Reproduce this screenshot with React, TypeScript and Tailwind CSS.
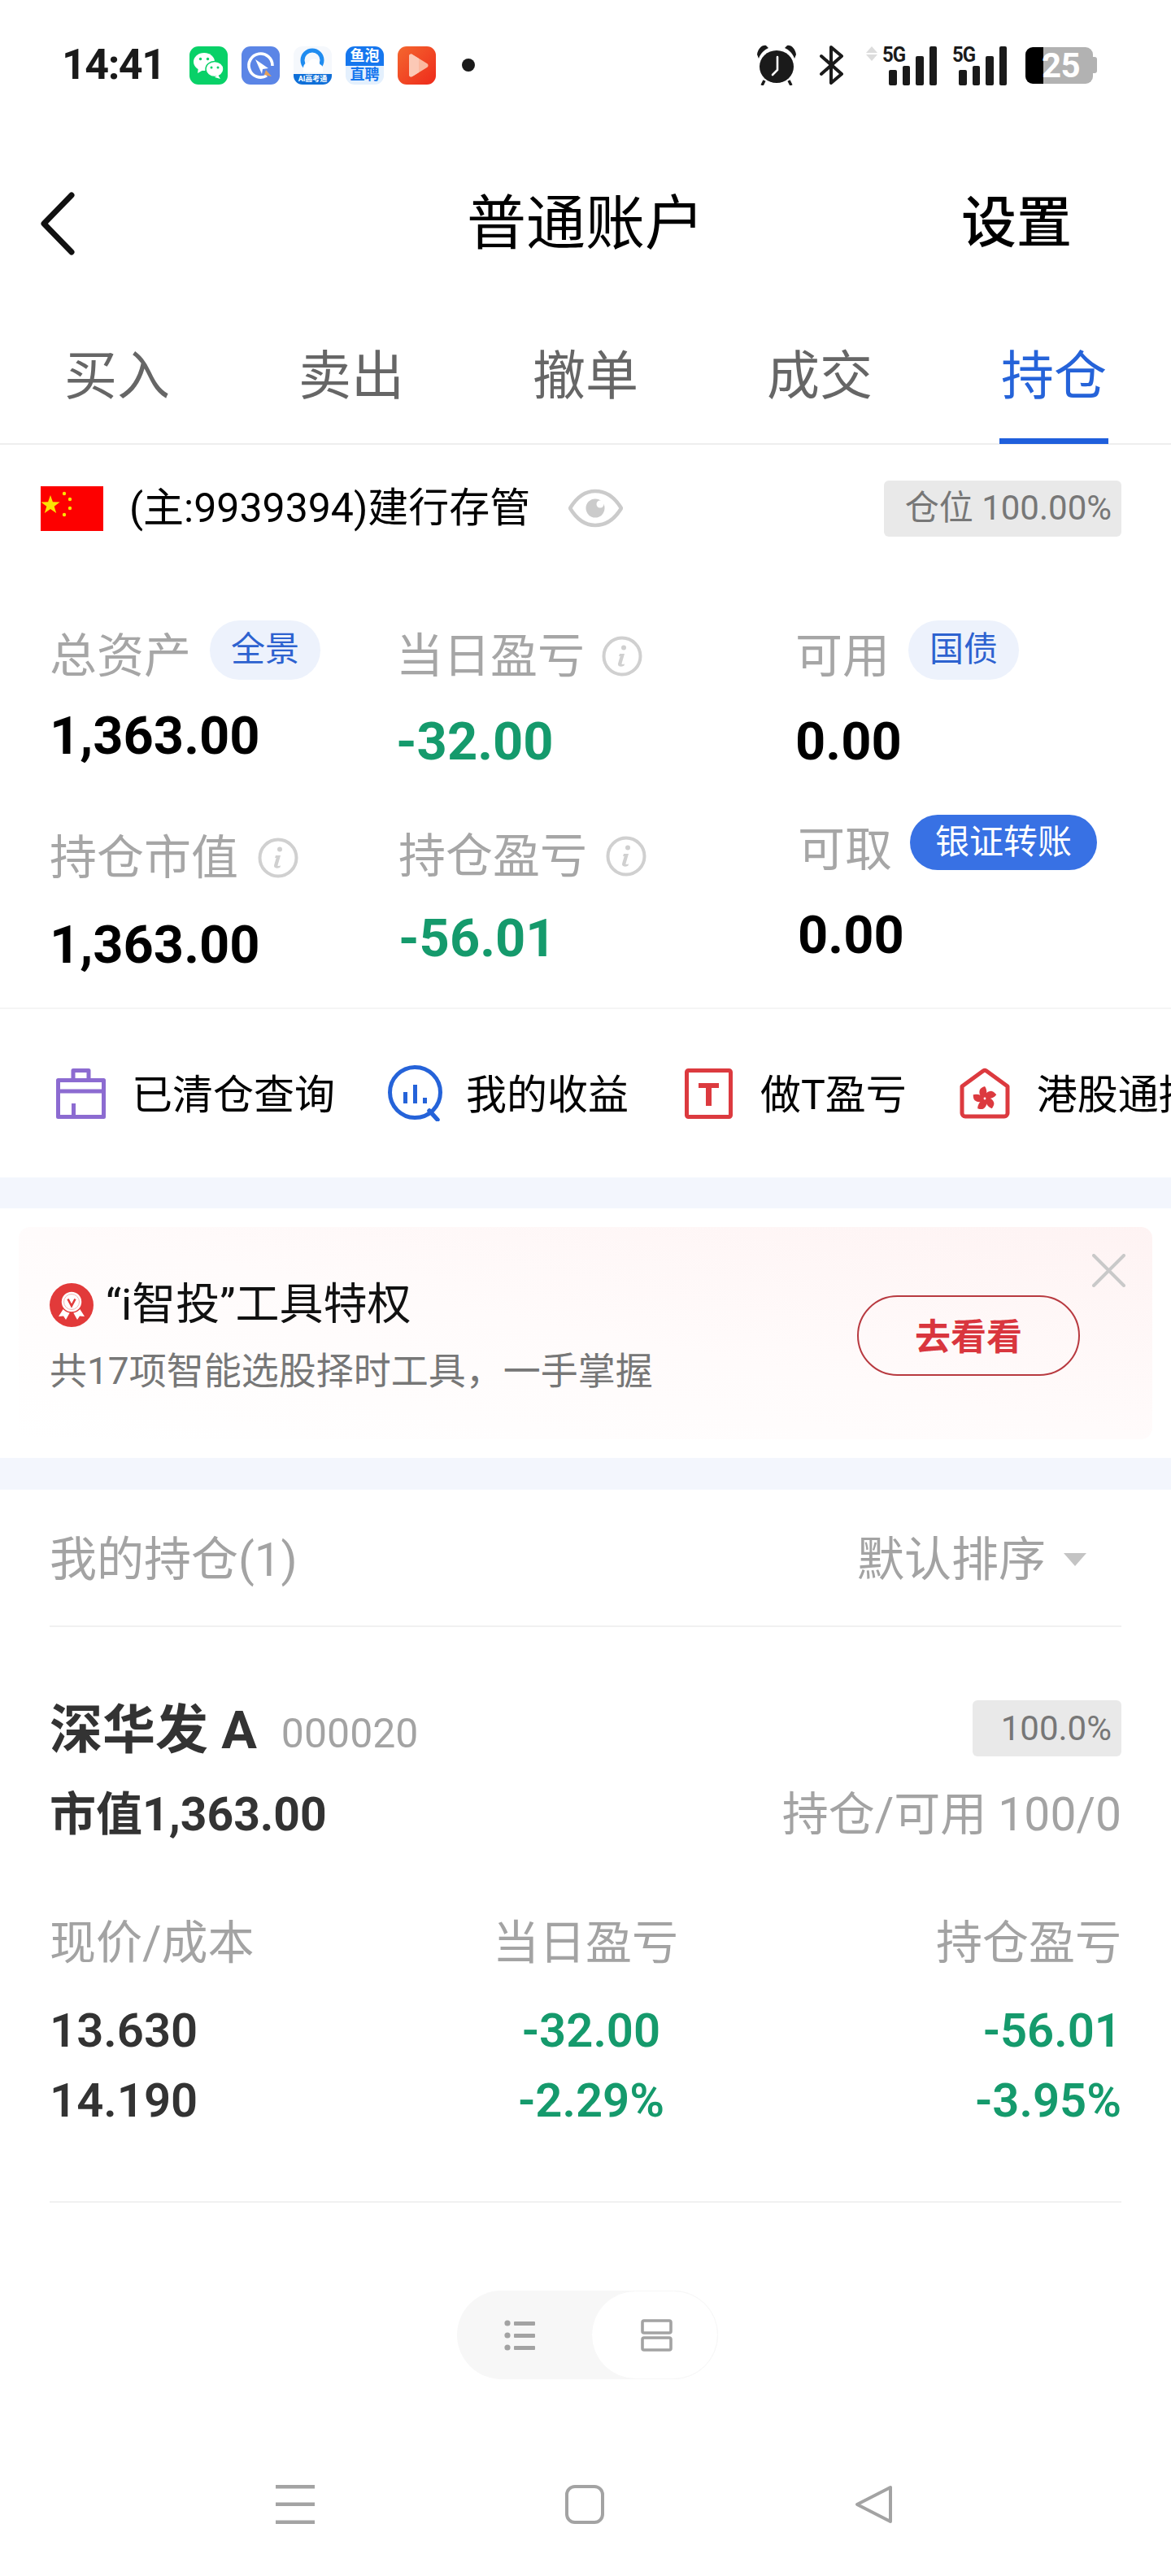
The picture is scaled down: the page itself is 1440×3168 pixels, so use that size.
import { ReactNode } from 'react';

const BLUE = '#2563d9';

// status bar app icons
function WeChatIcon() {
    return (
        <svg width="47" height="47" viewBox="0 0 47 47" className="shrink-0">
            <rect width="47" height="47" rx="11" fill="#08d168" />
            <ellipse cx="18" cy="19" rx="13" ry="11" fill="#fff" />
            <path d="M11 26l-1 7 7-4z" fill="#fff" />
            <ellipse cx="31" cy="28" rx="11" ry="9.5" fill="#fff" stroke="#08d168" strokeWidth="1.5" />
            <path d="M35 35l3 5-7-2z" fill="#fff" />
            <circle cx="13.5" cy="15.5" r="1.7" fill="#08d168" />
            <circle cx="22.5" cy="15.5" r="1.7" fill="#08d168" />
            <circle cx="27" cy="26" r="1.5" fill="#08d168" />
            <circle cx="35" cy="26" r="1.5" fill="#08d168" />
        </svg>
    );
}

function CompassIcon() {
    return (
        <svg width="47" height="47" viewBox="0 0 47 47" className="shrink-0">
            <rect width="47" height="47" rx="11" fill="#5b85e6" />
            <path d="M31 36a14.5 14.5 0 1 1 7-12" fill="none" stroke="#fff" strokeWidth="3.6" />
            <path d="M17 16l16 11-7 1-1 6z" fill="#fff" />
            <path d="M30 29l7 8-9-2z" fill="#e5a05a" />
        </svg>
    );
}

function GaokaoIcon() {
    return (
        <div className="relative w-[47px] h-[47px] shrink-0 rounded-[11px] overflow-hidden bg-[#f5f8fc] flex flex-col justify-end">
            <svg width="47" height="47" viewBox="0 0 47 47" className="absolute top-0 left-0">
                <circle cx="23" cy="17" r="12" fill="none" stroke="#1f8cf0" strokeWidth="5" />
                <circle cx="18" cy="26" r="6" fill="#fff" />
                <circle cx="25" cy="23" r="7.5" fill="#fff" />
                <circle cx="31" cy="27" r="5" fill="#fff" />
                <rect x="12" y="26" width="24" height="6" fill="#fff" />
            </svg>
            <div className="relative h-[13px] bg-[#0f6fd8] flex items-center justify-center text-[9px] leading-none text-white font-bold whitespace-nowrap">AI高考通</div>
        </div>
    );
}

function YupaoIcon() {
    return (
        <div className="w-[47px] h-[47px] shrink-0 rounded-[11px] overflow-hidden flex flex-col">
            <div className="h-[24px] bg-[#1677ee] flex items-center justify-center text-[18px] leading-none text-white font-bold whitespace-nowrap">鱼泡</div>
            <div className="h-[23px] bg-[#e4f0fd] flex items-center justify-center text-[18px] leading-none text-[#1677ee] font-bold whitespace-nowrap">直聘</div>
        </div>
    );
}

function PlayIcon() {
    return (
        <svg width="47" height="47" viewBox="0 0 47 47" className="shrink-0">
            <defs>
                <linearGradient id="playBg" x1="0" y1="0" x2="1" y2="1">
                    <stop offset="0" stopColor="#f4672f" />
                    <stop offset="1" stopColor="#ee2a1b" />
                </linearGradient>
            </defs>
            <rect width="47" height="47" rx="11" fill="url(#playBg)" />
            <path d="M14 12c0-2 2-3 4-2l18 11c2 1 2 4 0 5L18 37c-2 1-4 0-4-2z" fill="#fbb9a0" />
            <path d="M14 12c0-2 2-3 4-2l8 5v17l-8 5c-2 1-4 0-4-2z" fill="#fcc9b6" />
        </svg>
    );
}

function AlarmIcon() {
    return (
        <svg width="50" height="50" viewBox="0 0 50 50" className="shrink-0">
            <ellipse cx="25" cy="27" rx="21" ry="20" fill="#1a1a1a" />
            <path d="M1 12C2 5 7 0 12 1l3 3C10 6 5 11 3 17z" fill="#1a1a1a" />
            <path d="M49 12C48 5 43 0 38 1l-3 3c5 2 10 7 12 13z" fill="#1a1a1a" />
            <path d="M10 44l-3 6M40 44l3 6" stroke="#1a1a1a" strokeWidth="3.5" />
            <path d="M26 15v16l-6 6" fill="none" stroke="#fff" strokeWidth="2.6" strokeLinecap="round" />
        </svg>
    );
}

function BluetoothIcon() {
    return (
        <svg width="30" height="48" viewBox="0 0 30 48" className="shrink-0">
            <path d="M2 13l25 22-13 11V2l13 11L2 35" fill="none" stroke="#1a1a1a" strokeWidth="4" strokeLinejoin="round" strokeLinecap="round" />
        </svg>
    );
}

function SignalBars() {
    return (
        <div className="flex items-end gap-[7px] h-[48px] mt-[1px]">
            <div className="w-[9.5px] h-[19px] rounded-[2px] bg-[#1a1a1a]" />
            <div className="w-[9.5px] h-[24px] rounded-[2px] bg-[#1a1a1a]" />
            <div className="w-[9.5px] h-[36px] rounded-[2px] bg-[#1a1a1a]" />
            <div className="w-[9.5px] h-[48px] rounded-[2px] bg-[#1a1a1a]" />
        </div>
    );
}

function FiveG() {
    return <span className="absolute top-[-2px] left-[-8px] text-[24px] leading-none font-bold tracking-[-1px] text-[#1a1a1a] scale-y-110 origin-top">5G</span>;
}

function InfoIcon() {
    return (
        <svg width="50" height="50" viewBox="0 0 50 50" className="shrink-0">
            <circle cx="25" cy="25" r="22.5" fill="none" stroke="#d0d0d0" strokeWidth="4" />
            <circle cx="27" cy="14.5" r="3" fill="#d0d0d0" />
            <path d="M22 22h6l-3.5 12c-.3 1.2.8 1.5 3.5.2l-.6 2.6c-4 1.6-8.4 1.2-7.2-3.2l2.5-8.6h-1.6z" fill="#d0d0d0" />
        </svg>
    );
}

function Flag() {
    return (
        <svg width="77" height="55" viewBox="0 0 77 55" className="shrink-0">
            <rect width="77" height="55" fill="#fd0000" />
            <path d="M12 11l2.9 8.2 8.7.2-6.9 5.3 2.5 8.3-7.2-4.9-7.2 4.9 2.5-8.3-6.9-5.3 8.7-.2z" fill="#fbe204" />
            <circle cx="29" cy="9" r="2.2" fill="#fbe204" />
            <circle cx="36" cy="16" r="2.2" fill="#fbe204" />
            <circle cx="36" cy="27" r="2.2" fill="#fbe204" />
            <circle cx="29" cy="35" r="2.2" fill="#fbe204" />
        </svg>
    );
}

function Pill({ children }: { children: ReactNode }) {
    return (
        <span className="h-[73px] px-[26px] rounded-full bg-[#edf2fc] text-[#2d62d0] text-[42px] leading-none flex items-center whitespace-nowrap">
            {children}
        </span>
    );
}

function StatLabel({ children }: { children: ReactNode }) {
    return <span className="text-[58px] leading-none text-[#a6a6a6] whitespace-nowrap">{children}</span>;
}

function StatValue({ children, green }: { children: ReactNode; green?: boolean }) {
    return (
        <div className={`h-[64px] flex items-center text-[65px] leading-none font-bold ${green ? 'text-[#159a6c]' : 'text-black'}`}>
            {children}
        </div>
    );
}

function ShortcutLabel({ children }: { children: ReactNode }) {
    return <span className="text-[50px] leading-none text-black whitespace-nowrap">{children}</span>;
}

// toolbar shortcut glyphs
function BriefcaseIcon() {
    return (
        <svg width="61" height="62" viewBox="0 0 61 62" className="shrink-0" fill="none" stroke="#8c6bd1" strokeWidth="5" strokeLinejoin="round">
            <path d="M2.5 14.5h56v45h-56z" />
            <path d="M21 14V2.5h19V14" />
            <path d="M2.5 28h56" />
            <path d="M21.5 59V43" />
        </svg>
    );
}

function SearchChartIcon() {
    return (
        <svg width="69" height="69" viewBox="0 0 69 69" className="shrink-0">
            <circle cx="34.5" cy="33.5" r="31" fill="none" stroke={BLUE} strokeWidth="5" />
            <path d="M52 56l10 11" stroke={BLUE} strokeWidth="5.5" strokeLinecap="round" />
            <rect x="20" y="33" width="5" height="14" fill={BLUE} />
            <rect x="32" y="24" width="5" height="23" fill={BLUE} />
            <rect x="44" y="40" width="5" height="7" fill={BLUE} />
        </svg>
    );
}

function TBoxIcon() {
    return (
        <svg width="59" height="62" viewBox="0 0 59 62" className="shrink-0">
            <rect x="2.5" y="2.5" width="54" height="57" rx="2" fill="none" stroke="#dc3a3f" strokeWidth="5" />
            <path d="M17 18h25v6H33v22h-7V24h-9z" fill="#dc3a3f" />
        </svg>
    );
}

function HongKongHomeIcon() {
    return (
        <svg width="62" height="63" viewBox="0 0 62 63" className="shrink-0">
            <path d="M3 23L29 4c1.500-1 2.500-1 4 0l26 19v33a4 4 0 0 1-4 4H7a4 4 0 0 1-4-4z" fill="none" stroke="#dc3a3f" strokeWidth="5" strokeLinejoin="round" />
            {[0, 72, 144, 216, 288].map(angle => (
                <path key={angle} d="M31 38c-5-1-8-6-6-11 1-2 3-3 6-4 3 4 3 10 0 15z" fill="#dc3a3f" transform={`rotate(${angle} 31 38)`} />
            ))}
            <circle cx="31" cy="38" r="1.4" fill="#fff" />
        </svg>
    );
}

function MedalIcon() {
    return (
        <svg width="54" height="54" viewBox="0 0 54 54" className="shrink-0">
            <circle cx="27" cy="27" r="27" fill="#e23a3a" />
            <path d="M18 30l-7 11 6-.5 3 4.500 5-9zM36 30l7 11-6-.5-3 4.500-5-9z" fill="#fff" />
            <circle cx="27" cy="23" r="13" fill="#fff" stroke="#e23a3a" strokeWidth="1.500" />
            <circle cx="27" cy="23" r="9.500" fill="none" stroke="#f3b5b5" strokeWidth="1" />
            <path d="M22.500 19.500l4.500 8.500 4.500-8.500" fill="none" stroke="#e23a3a" strokeWidth="2.600" />
        </svg>
    );
}

function GreyValue({ children }: { children: ReactNode }) {
    return <span className="text-[58px] leading-none text-[#a3a3a3] whitespace-nowrap">{children}</span>;
}

function ColumnHead({ children, className }: { children: ReactNode; className?: string }) {
    return <span className={`text-[57px] leading-none text-[#a3a3a3] whitespace-nowrap ${className ?? ''}`}>{children}</span>;
}

export default function App() {
    const tabs = ['买入', '卖出', '撤单', '成交', '持仓'];

    return (
        <div className="w-[1440px] h-[3168px] bg-white overflow-hidden font-['Roboto','Noto_Sans_CJK_SC',sans-serif]">
            {/* status bar */}
            <div className="h-[160px] flex items-center justify-between pl-[76px] pr-[91px]">
                <div className="flex items-center">
                    <span className="w-[157px] text-[52px] leading-none font-bold text-[#1a1a1a] tracking-[-1.5px]">14:41</span>
                    <div className="flex items-center gap-[17px]">
                        <WeChatIcon />
                        <CompassIcon />
                        <GaokaoIcon />
                        <YupaoIcon />
                        <PlayIcon />
                    </div>
                    <div className="w-[16px] h-[16px] rounded-full bg-[#1a1a1a] ml-[32px]" />
                </div>
                <div className="flex items-center">
                    <AlarmIcon />
                    <div className="ml-[28px]"><BluetoothIcon /></div>
                    <div className="ml-[27px] mb-[29px] flex flex-col gap-[2px]">
                        <div className="w-0 h-0 border-x-[7px] border-x-transparent border-b-[8px] border-b-[#dcdcdc]" />
                        <div className="w-0 h-0 border-x-[7px] border-x-transparent border-t-[8px] border-t-[#dcdcdc]" />
                    </div>
                    <div className="relative ml-[14px]"><FiveG /><SignalBars /></div>
                    <div className="relative ml-[27px]"><FiveG /><SignalBars /></div>
                    <div className="relative ml-[23px] w-[88px] h-[45px] flex">
                        <div className="w-[22px] h-full rounded-l-[9px] bg-black" />
                        <div className="w-[61px] h-full rounded-r-[9px] bg-[#b2b2b2]" />
                        <div className="w-[5px] h-[20px] mt-[12px] rounded-r-[3px] bg-[#b2b2b2]" />
                        <span className="absolute left-[20px] top-[2px] text-[42px] leading-none font-bold text-white tracking-[-0.5px]">25</span>
                    </div>
                </div>
            </div>

            {/* title bar */}
            <div className="h-[230px] grid grid-cols-[1fr_auto_1fr] items-center">
                <svg width="44" height="78" viewBox="0 0 44 78" className="ml-[49px]" fill="none" stroke="#111" strokeWidth="7" strokeLinecap="round" strokeLinejoin="round">
                    <path d="M39 4L5 39l34 35" />
                </svg>
                <span className="text-[73px] leading-none text-black">普通账户</span>
                <span className="text-[68px] leading-none text-black text-right pr-[122px] font-medium">设置</span>
            </div>

            {/* order tabs */}
            <div className="h-[157px] flex border-b-[2px] border-[#eeeeee]">
                {tabs.map(tab => {
                    const active = tab === '持仓';
                    return (
                        <div key={tab} className="relative w-[288px] flex items-center justify-center pb-[8px]">
                            <span className={`text-[65px] leading-none ${active ? 'text-[#2563d9]' : 'text-[#666666]'}`}>{tab}</span>
                            {active && <div className="absolute bottom-[-1px] left-[77px] w-[134px] h-[7px] bg-[#1f5fdc]" />}
                        </div>
                    );
                })}
            </div>

            {/* account row */}
            <div className="h-[156px] flex items-center pl-[50px] pr-[61px]">
                <Flag />
                <span className="ml-[32px] text-[50px] leading-none text-black whitespace-nowrap">(主:9939394)建行存管</span>
                <svg width="67" height="48" viewBox="0 0 67 48" className="ml-[47px] shrink-0">
                    <path d="M2 24C11 9 21 3 33 3s23 6 32 21c-9 15-20 21-32 21S11 39 2 24z" fill="none" stroke="#cbcbcb" strokeWidth="4.5" />
                    <circle cx="33" cy="24" r="11.500" fill="#cbcbcb" />
                    <circle cx="39" cy="19" r="4.500" fill="#fff" />
                </svg>
                <div className="ml-auto h-[69px] w-[292px] rounded-[6px] bg-[#e9e9e9] flex items-center justify-end pr-[12px] text-[42px] leading-none text-[#777777] whitespace-nowrap">
                    仓位 100.00%
                </div>
            </div>

            {/* balances */}
            <div className="h-[538px] flex border-b-[2px] border-[#f5f5f5]">
                <div className="ml-[61px] w-[426px] pt-[67px]">
                    <div className="h-[74px] flex items-center gap-[23px]"><StatLabel>总资产</StatLabel><div className="-mt-[16px]"><Pill>全景</Pill></div></div>
                    <div className="mt-[29px]"><StatValue>1,363.00</StatValue></div>
                    <div className="h-[74px] mt-[81px] flex items-center gap-[24px]"><StatLabel>持仓市值</StatLabel><InfoIcon /></div>
                    <div className="mt-[38px]"><StatValue>1,363.00</StatValue></div>
                </div>
                <div className="w-[491px] pt-[67px]">
                    <div className="h-[74px] flex items-center gap-[21px]"><StatLabel>当日盈亏</StatLabel><InfoIcon /></div>
                    <div className="mt-[36px]"><StatValue green>-32.00</StatValue></div>
                    <div className="h-[74px] mt-[72px] ml-[3px] flex items-center gap-[23px]"><StatLabel>持仓盈亏</StatLabel><InfoIcon /></div>
                    <div className="mt-[32px] ml-[3px]"><StatValue green>-56.01</StatValue></div>
                </div>
                <div className="pt-[67px]">
                    <div className="h-[74px] flex items-center gap-[23px]"><StatLabel>可用</StatLabel><div className="-mt-[16px]"><Pill>国债</Pill></div></div>
                    <div className="mt-[36px]"><StatValue>0.00</StatValue></div>
                    <div className="h-[74px] mt-[64px] ml-[3px] flex items-center gap-[22px]">
                        <StatLabel>可取</StatLabel>
                        <span className="-mt-[18px] h-[68px] w-[230px] rounded-full bg-[#3871e4] text-white text-[42px] leading-none flex items-center justify-center whitespace-nowrap">银证转账</span>
                    </div>
                    <div className="mt-[36px] ml-[3px]"><StatValue>0.00</StatValue></div>
                </div>
            </div>

            {/* shortcuts */}
            <div className="h-[207px] flex items-center pl-[69px] overflow-hidden">
                <BriefcaseIcon />
                <div className="ml-[32px] pt-[4px]"><ShortcutLabel>已清仓查询</ShortcutLabel></div>
                <div className="ml-[64px]"><SearchChartIcon /></div>
                <div className="ml-[28px] pt-[4px]"><ShortcutLabel>我的收益</ShortcutLabel></div>
                <div className="ml-[69px]"><TBoxIcon /></div>
                <div className="ml-[34px] pt-[4px]"><ShortcutLabel>做T盈亏</ShortcutLabel></div>
                <div className="ml-[65px]"><HongKongHomeIcon /></div>
                <div className="ml-[33px] pt-[4px]"><ShortcutLabel>港股通持仓</ShortcutLabel></div>
            </div>

            <div className="h-[38px] bg-[#f3f6fd]" />

            {/* promo banner */}
            <div className="h-[307px] pt-[23px] px-[23px]">
                <div className="relative h-[261px] rounded-[14px] bg-linear-to-tr from-white via-[#fffbfb] to-[#fef3f3] flex items-center pl-[38px] pr-[89px]">
                    <div className="flex-1 pt-[8px]">
                        <div className="flex items-center gap-[15px]">
                            <MedalIcon />
                            <span className="text-[54px] leading-none text-[#111111] whitespace-nowrap">“i智投”工具特权</span>
                        </div>
                        <div className="mt-[31px] text-[46px] leading-none text-[#777777] whitespace-nowrap">共17项智能选股择时工具，一手掌握</div>
                    </div>
                    <div className="w-[274px] h-[99px] pt-[6px] rounded-full border-[2.5px] border-[#b83a40] flex items-center justify-center text-[44px] leading-none font-bold text-[#d9363e] mt-[5px]">去看看</div>
                    <svg width="41" height="41" viewBox="0 0 41 41" className="absolute top-[33px] right-[33px]" stroke="#c9c9c9" strokeWidth="4" strokeLinecap="round">
                        <path d="M2 2l37 37M39 2L2 39" />
                    </svg>
                </div>
            </div>

            <div className="h-[39px] bg-[#f3f6fd]" />

            {/* holdings */}
            <div className="mx-[61px]">
                <div className="h-[169px] pt-[4px] flex items-center justify-between border-b-[2px] border-[#f1f1f1]">
                    <GreyValue>我的持仓(1)</GreyValue>
                    <div className="flex items-center gap-[22px] pr-[43px]">
                        <GreyValue>默认排序</GreyValue>
                        <div className="w-0 h-0 border-x-[14px] border-x-transparent border-t-[16px] border-t-[#c4c4c4]" />
                    </div>
                </div>

                <div className="mt-[89px] flex items-center justify-between">
                    <div className="flex items-center gap-[30px] pt-[6px]">
                        <span className="text-[65px] leading-none font-bold text-[#333333] whitespace-nowrap">深华发 A</span>
                        <span className="text-[50px] leading-none text-[#a3a3a3] mt-[7px]">000020</span>
                    </div>
                    <div className="w-[183px] h-[69px] rounded-[6px] bg-[#e9e9e9] flex items-center justify-end pr-[12px] text-[42px] leading-none text-[#777777]">100.0%</div>
                </div>

                <div className="mt-[34px] h-[70px] pt-[3px] flex items-center justify-between">
                    <span className="text-[57px] leading-none font-bold text-[#333333] whitespace-nowrap">市值1,363.00</span>
                    <ColumnHead>持仓/可用 100/0</ColumnHead>
                </div>

                <div className="mt-[88px] h-[70px] pt-[3px] grid grid-cols-3 items-center">
                    <ColumnHead>现价/成本</ColumnHead>
                    <ColumnHead className="text-center">当日盈亏</ColumnHead>
                    <ColumnHead className="text-right">持仓盈亏</ColumnHead>
                </div>
                <div className="mt-[39px] h-[70px] grid grid-cols-3 items-center text-[58px] leading-none font-semibold">
                    <span className="text-[#333333]">13.630</span>
                    <span className="text-[#159a6c] text-center pl-[14px]">-32.00</span>
                    <span className="text-[#159a6c] text-right">-56.01</span>
                </div>
                <div className="mt-[16px] h-[70px] grid grid-cols-3 items-center text-[58px] leading-none font-semibold">
                    <span className="text-[#333333]">14.190</span>
                    <span className="text-[#159a6c] text-center pl-[14px]">-2.29%</span>
                    <span className="text-[#159a6c] text-right">-3.95%</span>
                </div>
                <div className="mt-[89px] h-[2px] bg-[#f1f1f1]" />
            </div>

            {/* list / card toggle */}
            <div className="mt-[108px] flex justify-center pl-[5px]">
                <div className="w-[321px] h-[109px] rounded-full bg-[#f7f7f7] flex justify-end">
                    <div className="relative flex-1 flex items-center justify-center pr-[12px]">
                        <svg width="38" height="40" viewBox="0 0 38 40" fill="#a3a3a3">
                            <circle cx="4" cy="5" r="3.6" /><rect x="12" y="3" width="26" height="5" rx="1" />
                            <circle cx="4" cy="20" r="3.6" /><rect x="12" y="18" width="26" height="5" rx="1" />
                            <circle cx="4" cy="35" r="3.6" /><rect x="12" y="33" width="26" height="5" rx="1" />
                        </svg>
                    </div>
                    <div className="w-[156px] h-full rounded-full bg-white border border-[#f7f7f7] flex items-center justify-center pl-[4px]">
                        <svg width="39" height="40" viewBox="0 0 39 40" fill="none" stroke="#a3a3a3" strokeWidth="3.6">
                            <rect x="2" y="2" width="35" height="15" rx="2" />
                            <rect x="2" y="23" width="35" height="15" rx="2" />
                        </svg>
                    </div>
                </div>
            </div>

            {/* system navigation */}
            <div className="mt-[130px] h-[48px] flex pl-[339px]">
                <svg width="48" height="48" viewBox="0 0 48 48" fill="#a3a3a3">
                    <rect y="0" width="48" height="4.5" /><rect y="21.5" width="48" height="4.5" /><rect y="43.5" width="48" height="4.5" />
                </svg>
                <svg width="48" height="48" viewBox="0 0 48 48" fill="none" stroke="#a3a3a3" strokeWidth="4" className="ml-[308px]">
                    <rect x="2" y="2" width="44" height="44" rx="10" />
                </svg>
                <svg width="47" height="48" viewBox="0 0 47 48" fill="none" stroke="#a3a3a3" strokeWidth="4" strokeLinejoin="round" className="ml-[308px]">
                    <path d="M44 3v42L3 24z" />
                </svg>
            </div>
        </div>
    );
}
